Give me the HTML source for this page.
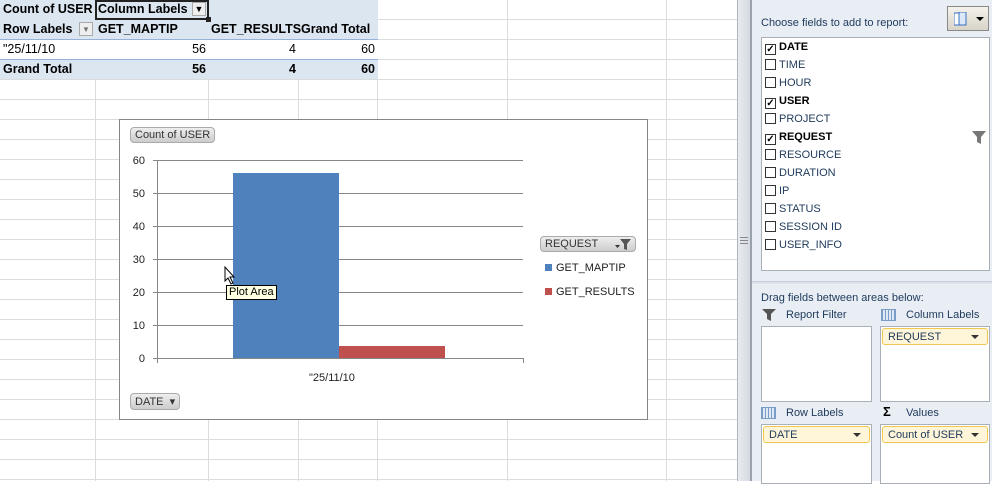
<!DOCTYPE html>
<html><head><meta charset="utf-8"><style>
*{margin:0;padding:0;box-sizing:border-box}
body{width:992px;height:481px;overflow:hidden;background:#fff;font-family:"Liberation Sans",sans-serif;position:relative}
.a{position:absolute}
.vl{position:absolute;top:0;height:481px;width:1px;background:#dadcdd}
.hl{position:absolute;left:0;width:737px;height:1px;background:#dadcdd}
.c{position:absolute;font-size:12.5px;color:#000;font-family:"Liberation Sans",sans-serif;line-height:19px;white-space:nowrap}
.b{font-weight:bold}
.t{font-family:"Liberation Sans",sans-serif;font-size:11px;color:#222}
.pill{position:absolute;background:linear-gradient(#eee,#ccc);border:1px solid #aaa;border-radius:4px;font-size:11px;color:#333;font-family:"Liberation Sans",sans-serif;padding:1px 4px}
.fld{position:absolute;left:765px;font-size:11px;color:#1e395b;line-height:12px}
.cb{display:inline-block;width:11px;height:11px;border:1px solid #333;background:#fff;vertical-align:-2px;margin-right:3px;font-size:10px;line-height:9px;text-align:center;color:#000}
.box{position:absolute;background:#fff;border:1px solid #aab0b8}
.tag{position:absolute;background:#fff6d9;border:1px solid #f0c850;border-radius:3px;font-size:11px;color:#1e395b;padding:2px 5px;height:17px}
.tag:after{content:"";position:absolute;right:8px;top:6px;border:4px solid transparent;border-top:4px solid #333}
.grd{position:absolute;width:15px;height:12px;border:1px solid #7a9cc8;background:repeating-linear-gradient(90deg,#7a9cc8 0 1px,#e0e8f4 1px 3px),#e0e8f4}
</style></head><body>
<div class="vl" style="left:95px"></div><div class="vl" style="left:208px"></div><div class="vl" style="left:298px"></div><div class="vl" style="left:377px"></div><div class="vl" style="left:507px"></div><div class="vl" style="left:666px"></div>
<div class="hl" style="top:19px"></div><div class="hl" style="top:39px"></div><div class="hl" style="top:59px"></div><div class="hl" style="top:79px"></div><div class="hl" style="top:99px"></div><div class="hl" style="top:119px"></div><div class="hl" style="top:139px"></div><div class="hl" style="top:159px"></div><div class="hl" style="top:179px"></div><div class="hl" style="top:199px"></div><div class="hl" style="top:219px"></div><div class="hl" style="top:239px"></div><div class="hl" style="top:259px"></div><div class="hl" style="top:279px"></div><div class="hl" style="top:299px"></div><div class="hl" style="top:319px"></div><div class="hl" style="top:339px"></div><div class="hl" style="top:359px"></div><div class="hl" style="top:379px"></div><div class="hl" style="top:399px"></div><div class="hl" style="top:419px"></div><div class="hl" style="top:439px"></div><div class="hl" style="top:459px"></div><div class="hl" style="top:479px"></div>
<div class="a" style="left:0;top:0;width:378px;height:40px;background:#dce6f1"></div>
<div class="a" style="left:0;top:39px;width:378px;height:1px;background:#95b3d7"></div>
<div class="a" style="left:0;top:40px;width:378px;height:19px;background:#fff"></div>
<div class="a" style="left:0;top:59px;width:378px;height:1px;background:#95b3d7"></div>
<div class="a" style="left:0;top:60px;width:378px;height:19px;background:#dce6f1"></div>
<div class="a" style="left:95px;top:0;width:114px;height:20px;border:2px solid #222"></div>
<div class="a" style="left:206px;top:17px;width:5px;height:5px;background:#222"></div>
<div class="c b" style="left:3px;top:0">Count of USER</div>
<div class="c b" style="left:98px;top:0">Column Labels</div>
<div class="a" style="left:192px;top:2px;width:14px;height:14px;background:#eee;border:1px solid #aaa;font-size:9px;text-align:center;line-height:12px">▼</div>
<div class="c b" style="left:3px;top:20px">Row Labels</div>
<div class="a" style="left:79px;top:22px;width:14px;height:14px;background:#eee;border:1px solid #aaa;font-size:8px;text-align:center;line-height:13px;color:#777">▼</div>
<div class="c b" style="left:98px;top:20px">GET_MAPTIP</div>
<div class="c b" style="left:211px;top:20px">GET_RESULTS</div>
<div class="c b" style="left:301px;top:20px">Grand Total</div>
<div class="c" style="left:3px;top:40px">"25/11/10</div>
<div class="c" style="left:95px;top:40px;width:111px;text-align:right">56</div>
<div class="c" style="left:208px;top:40px;width:88px;text-align:right">4</div>
<div class="c" style="left:298px;top:40px;width:77px;text-align:right">60</div>
<div class="c b" style="left:3px;top:60px">Grand Total</div>
<div class="c b" style="left:95px;top:60px;width:111px;text-align:right">56</div>
<div class="c b" style="left:208px;top:60px;width:88px;text-align:right">4</div>
<div class="c b" style="left:298px;top:60px;width:77px;text-align:right">60</div>
<div class="a" style="left:119px;top:119px;width:529px;height:301px;background:#fff;border:1px solid #868686"></div>
<div class="pill" style="left:130px;top:127px">Count of USER</div>
<svg class="a" style="left:119px;top:119px" width="529" height="301">
<g stroke="#868686" stroke-width="1">
<line x1="34" y1="41.5" x2="404" y2="41.5"/><line x1="34" y1="74.5" x2="404" y2="74.5"/><line x1="34" y1="107.5" x2="404" y2="107.5"/><line x1="34" y1="140.5" x2="404" y2="140.5"/><line x1="34" y1="173.5" x2="404" y2="173.5"/><line x1="34" y1="206.5" x2="404" y2="206.5"/><line x1="34" y1="239.5" x2="404" y2="239.5"/>
<line x1="38.5" y1="41" x2="38.5" y2="244"/><line x1="404.5" y1="239" x2="404.5" y2="244"/></g>
<rect x="114" y="54" width="106" height="185" fill="#4f81bd"/>
<rect x="220" y="227" width="106" height="12" fill="#c0504d"/>
<g font-family="Liberation Sans" font-size="11" fill="#222" text-anchor="end">
<text x="26" y="45">60</text><text x="26" y="78">50</text><text x="26" y="111">40</text><text x="26" y="144">30</text><text x="26" y="177">20</text><text x="26" y="210">10</text><text x="26" y="243">0</text></g>
<text x="190" y="262" font-family="Liberation Sans" font-size="11" fill="#222">"25/11/10</text>
<rect x="426" y="145" width="7" height="7" fill="#4f81bd"/><text x="437" y="152" font-family="Liberation Sans" font-size="11" fill="#222">GET_MAPTIP</text>
<rect x="426" y="169" width="7" height="7" fill="#c0504d"/><text x="437" y="176" font-family="Liberation Sans" font-size="11" fill="#222">GET_RESULTS</text>
<path d="M106 148 v14 l3-3 3 6 2-1-3-6 4 0z" fill="#fff" stroke="#000"/>
</svg>
<div class="pill" style="left:540px;top:236px;width:96px">REQUEST<svg style="position:absolute;right:4px;top:2px" width="16" height="11"><path d="M0 6h5l-2.5 3z" fill="#333"/><path d="M5 0h11l-4 5v6l-3-1v-5z" fill="#555"/></svg></div>
<div class="pill" style="left:130px;top:393px">DATE &nbsp;▾</div>
<div class="a" style="left:226px;top:285px;border:1px solid #000;background:#ffffe1;font-size:11px;padding:0 2px;line-height:13px;color:#000">Plot Area</div>
<div class="a" style="left:737px;top:0;width:14px;height:481px;background:linear-gradient(90deg,#e8ebf0,#d3d8e0);border-left:1px solid #b0b6c0"></div>
<div class="a" style="left:750px;top:0;width:2px;height:481px;background:#9aa1ab"></div>
<div class="a" style="left:740px;top:237px;width:8px;height:7px;border-top:1px solid #888;border-bottom:1px solid #888"></div>
<div class="a" style="left:740px;top:240px;width:8px;height:1px;background:#888"></div>
<div class="a" style="left:752px;top:0;width:240px;height:481px;background:#e9eef5"></div>
<div class="a" style="left:947px;top:6px;width:42px;height:25px;background:linear-gradient(#f4f2ec,#d8d4c8);border:1px solid #888"><svg style="position:absolute;left:6px;top:5px" width="30" height="14"><rect x="0" y="1" width="6" height="12" fill="#fff" stroke="#3a6fc0"/><rect x="5" y="0" width="7" height="13" fill="#dbe8f8" stroke="#3a6fc0"/><path d="M22 5h8l-4 4z" fill="#000"/></svg></div>
<div class="a t" style="left:761px;top:17px;color:#1e395b">Choose fields to add to report:</div>
<div class="box" style="left:761px;top:37px;width:229px;height:234px"></div>
<div class="fld b" style="top:41px;color:#000"><span class="cb">✓</span>DATE</div>
<div class="fld" style="top:59px"><span class="cb"></span>TIME</div>
<div class="fld" style="top:77px"><span class="cb"></span>HOUR</div>
<div class="fld b" style="top:95px;color:#000"><span class="cb">✓</span>USER</div>
<div class="fld" style="top:113px"><span class="cb"></span>PROJECT</div>
<div class="fld b" style="top:131px;color:#000"><span class="cb">✓</span>REQUEST</div>
<svg class="a" style="left:972px;top:131px" width="14" height="13"><path d="M0 0h14l-5 6v7l-4-2v-5z" fill="#777"/></svg>
<div class="fld" style="top:149px"><span class="cb"></span>RESOURCE</div>
<div class="fld" style="top:167px"><span class="cb"></span>DURATION</div>
<div class="fld" style="top:185px"><span class="cb"></span>IP</div>
<div class="fld" style="top:203px"><span class="cb"></span>STATUS</div>
<div class="fld" style="top:221px"><span class="cb"></span>SESSION ID</div>
<div class="fld" style="top:239px"><span class="cb"></span>USER_INFO</div>
<div class="a" style="left:752px;top:281px;width:240px;height:3px;background:#dde3ec;border-top:1px solid #c8ced8"></div>
<div class="a t" style="left:761px;top:292px;color:#1e395b">Drag fields between areas below:</div>
<svg class="a" style="left:762px;top:309px" width="14" height="12"><path d="M0 0h14l-5 5v7l-4-2v-5z" fill="#555"/></svg>
<div class="a t" style="left:786px;top:309px;color:#1e395b">Report Filter</div>
<div class="grd" style="left:881px;top:309px"></div>
<div class="a t" style="left:906px;top:309px;color:#1e395b">Column Labels</div>
<div class="box" style="left:761px;top:326px;width:111px;height:76px"></div>
<div class="box" style="left:880px;top:326px;width:110px;height:76px"></div>
<div class="tag" style="left:882px;top:328px;width:106px">REQUEST</div>
<div class="grd" style="left:761px;top:407px"></div>
<div class="a t" style="left:786px;top:407px;color:#1e395b">Row Labels</div>
<div class="a" style="left:883px;top:404px;font-size:13px;font-weight:bold">Σ</div>
<div class="a t" style="left:906px;top:407px;color:#1e395b">Values</div>
<div class="box" style="left:761px;top:424px;width:111px;height:60px"></div>
<div class="box" style="left:880px;top:424px;width:110px;height:60px"></div>
<div class="tag" style="left:763px;top:426px;width:107px">DATE</div>
<div class="tag" style="left:882px;top:426px;width:106px">Count of USER</div>
</body></html>
